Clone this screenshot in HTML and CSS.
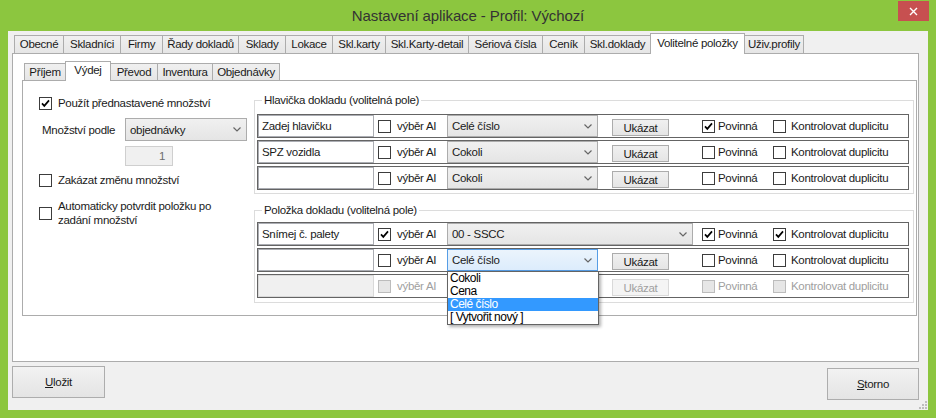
FILE: index.html
```html
<!DOCTYPE html>
<html lang="cs">
<head>
<meta charset="utf-8">
<title>Nastavení aplikace - Profil: Výchozí</title>
<link rel="stylesheet" href="styles.css">
</head>
<body>
<div class="window">
  <div class="titlebar">
    <div></div>
    <div class="title">Nastavení aplikace - Profil: Výchozí</div>
    <div class="tb-right">
      <div class="close"><svg width="9" height="9" viewBox="0 0 9 9"><path d="M1 1 L8 8 M8 1 L1 8" stroke="#fff" stroke-width="1.4" fill="none"/></svg></div>
    </div>
  </div>
  <div class="client">
    <div class="tabctl outer">
      <div class="strip outer-strip">
        <div class="tab">Obecné</div>
        <div class="tab">Skladníci</div>
        <div class="tab">Firmy</div>
        <div class="tab">Řady dokladů</div>
        <div class="tab">Sklady</div>
        <div class="tab">Lokace</div>
        <div class="tab">Skl.karty</div>
        <div class="tab">Skl.Karty-detail</div>
        <div class="tab">Sériová čísla</div>
        <div class="tab">Ceník</div>
        <div class="tab">Skl.doklady</div>
        <div class="tab sel">Volitelné položky</div>
        <div class="tab">Uživ.profily</div>
      </div>
      <div class="panel outer-panel">
        <div class="tabctl inner">
          <div class="strip inner-strip">
            <div class="tab">Příjem</div>
            <div class="tab sel">Výdej</div>
            <div class="tab">Převod</div>
            <div class="tab">Inventura</div>
            <div class="tab">Objednávky</div>
          </div>
          <div class="panel inner-panel">
            <div class="left">
              <div class="chk l1"><span class="box"><svg width="11" height="11" viewBox="0 0 11 11"><path d="M2 5.4 L4.3 7.9 L9 2.4" fill="none" stroke="#000" stroke-width="1.7"/></svg></span>Použít přednastavené množství</div>
              <div class="qty-row">
                <span class="qty-label">Množství podle</span>
                <div class="combo qty-combo"><span>objednávky</span><svg width="8" height="5" viewBox="0 0 8 5"><path d="M0.5 0.5 L4 4 L7.5 0.5" fill="none" stroke="#666" stroke-width="1.2"/></svg></div>
              </div>
              <div class="num">1</div>
              <div class="chk l2"><span class="box"></span>Zakázat změnu množství</div>
              <div class="chk l3"><span class="box"></span><span>Automaticky potvrdit položku po<br>zadání množství</span></div>
            </div>
            <div class="right">
              <div class="group g1">
                <div class="gtitle">Hlavička dokladu (volitelná pole)</div>
                <div class="rows">
                  <div class="row">
                    <div class="tb">Zadej hlavičku</div>
                    <div class="chk ai"><span class="box"></span>výběr AI</div>
                    <div class="combo"><span>Celé číslo</span><svg width="8" height="5" viewBox="0 0 8 5"><path d="M0.5 0.5 L4 4 L7.5 0.5" fill="none" stroke="#666" stroke-width="1.2"/></svg></div>
                    <div class="btn ukaz">Ukázat</div>
                    <div class="chk pov"><span class="box"><svg width="11" height="11" viewBox="0 0 11 11"><path d="M2 5.4 L4.3 7.9 L9 2.4" fill="none" stroke="#000" stroke-width="1.7"/></svg></span>Povinná</div>
                    <div class="chk dup"><span class="box"></span>Kontrolovat duplicitu</div>
                  </div>
                  <div class="row">
                    <div class="tb">SPZ vozidla</div>
                    <div class="chk ai"><span class="box"></span>výběr AI</div>
                    <div class="combo"><span>Cokoli</span><svg width="8" height="5" viewBox="0 0 8 5"><path d="M0.5 0.5 L4 4 L7.5 0.5" fill="none" stroke="#666" stroke-width="1.2"/></svg></div>
                    <div class="btn ukaz">Ukázat</div>
                    <div class="chk pov"><span class="box"></span>Povinná</div>
                    <div class="chk dup"><span class="box"></span>Kontrolovat duplicitu</div>
                  </div>
                  <div class="row">
                    <div class="tb"></div>
                    <div class="chk ai"><span class="box"></span>výběr AI</div>
                    <div class="combo"><span>Cokoli</span><svg width="8" height="5" viewBox="0 0 8 5"><path d="M0.5 0.5 L4 4 L7.5 0.5" fill="none" stroke="#666" stroke-width="1.2"/></svg></div>
                    <div class="btn ukaz">Ukázat</div>
                    <div class="chk pov"><span class="box"></span>Povinná</div>
                    <div class="chk dup"><span class="box"></span>Kontrolovat duplicitu</div>
                  </div>
                </div>
              </div>
              <div class="group g2">
                <div class="gtitle">Položka dokladu (volitelná pole)</div>
                <div class="rows">
                  <div class="row">
                    <div class="tb">Snímej č. palety</div>
                    <div class="chk ai"><span class="box"><svg width="11" height="11" viewBox="0 0 11 11"><path d="M2 5.4 L4.3 7.9 L9 2.4" fill="none" stroke="#000" stroke-width="1.7"/></svg></span>výběr AI</div>
                    <div class="combo wide"><span>00 - SSCC</span><svg width="8" height="5" viewBox="0 0 8 5"><path d="M0.5 0.5 L4 4 L7.5 0.5" fill="none" stroke="#666" stroke-width="1.2"/></svg></div>
                    <div class="chk pov"><span class="box"><svg width="11" height="11" viewBox="0 0 11 11"><path d="M2 5.4 L4.3 7.9 L9 2.4" fill="none" stroke="#000" stroke-width="1.7"/></svg></span>Povinná</div>
                    <div class="chk dup"><span class="box"><svg width="11" height="11" viewBox="0 0 11 11"><path d="M2 5.4 L4.3 7.9 L9 2.4" fill="none" stroke="#000" stroke-width="1.7"/></svg></span>Kontrolovat duplicitu</div>
                  </div>
                  <div class="row">
                    <div class="tb"></div>
                    <div class="chk ai"><span class="box"></span>výběr AI</div>
                    <div class="combo open"><span>Celé číslo</span><svg width="8" height="5" viewBox="0 0 8 5"><path d="M0.5 0.5 L4 4 L7.5 0.5" fill="none" stroke="#666" stroke-width="1.2"/></svg>
                      <div class="dropdown">
                        <div class="item">Cokoli</div>
                        <div class="item">Cena</div>
                        <div class="item hl">Celé číslo</div>
                        <div class="item">[ Vytvořit nový ]</div>
                      </div>
                    </div>
                    <div class="btn ukaz">Ukázat</div>
                    <div class="chk pov"><span class="box"></span>Povinná</div>
                    <div class="chk dup"><span class="box"></span>Kontrolovat duplicitu</div>
                  </div>
                  <div class="row dis">
                    <div class="tb"></div>
                    <div class="chk ai"><span class="box"></span>výběr AI</div>
                    <div class="combo"><span></span></div>
                    <div class="btn ukaz">Ukázat</div>
                    <div class="chk pov"><span class="box"></span>Povinná</div>
                    <div class="chk dup"><span class="box"></span>Kontrolovat duplicitu</div>
                  </div>
                </div>
              </div>
            </div>
          </div>
        </div>
      </div>
    </div>
    <div class="actions">
      <div class="btn big save"><span><u>U</u>ložit</span></div>
      <div class="btn big cancel"><span><u>S</u>torno</span></div>
    </div>
    <svg class="grip" width="8" height="8" viewBox="0 0 8 8"><g fill="#bdbdbd"><rect x="6" y="0" width="2" height="2"/><rect x="3" y="3" width="2" height="2"/><rect x="6" y="3" width="2" height="2"/><rect x="0" y="6" width="2" height="2"/><rect x="3" y="6" width="2" height="2"/><rect x="6" y="6" width="2" height="2"/></g></svg>
  </div>
</div>
</body>
</html>
```

FILE: styles.css
```css
* { box-sizing: border-box; }
html, body { margin: 0; padding: 0; }
body {
  width: 936px;
  height: 418px;
  overflow: hidden;
  font-family: "Liberation Sans", Arial, sans-serif;
  font-size: 11.5px;
  letter-spacing: -0.3px;
  color: #1a1a1a;
}
.window {
  width: 936px;
  height: 418px;
  background: #8cc63f;
  display: flex;
  flex-direction: column;
}
.titlebar {
  height: 31px;
  flex: none;
  display: grid;
  grid-template-columns: 1fr auto 1fr;
}
.title {
  font-size: 15px;
  letter-spacing: -0.1px;
  color: #333;
  line-height: 31px;
  white-space: nowrap;
}
.tb-right {
  display: flex;
  justify-content: flex-end;
  align-items: flex-start;
  padding-right: 7px;
}
.close {
  width: 31px;
  height: 20px;
  margin-top: 1px;
  background: #c75050;
  display: flex;
  align-items: center;
  justify-content: center;
}
.client {
  flex: 1;
  margin: 0 8px 8px;
  background: #f0f0f0;
  position: relative;
  display: flex;
  flex-direction: column;
}

/* tab controls */
.outer { margin: 2px 9px 0 4px; }
.strip {
  display: grid;
  align-items: end;
  justify-content: start;
  position: relative;
}
.outer-strip {
  height: 21px;
  margin-bottom: -1px;
  padding-left: 2px;
  grid-template-columns: 49px 57px 42px 76px 47px 47px 53px 83px 74px 42px 66px 94px 59px;
}
.tab {
  height: 19px;
  margin-right: -1px;
  border: 1px solid #acacac;
  border-bottom: 0;
  background: linear-gradient(#f0f0f0, #e5e5e5);
  text-align: center;
  line-height: 17px;
  white-space: nowrap;
  position: relative;
  z-index: 0;
}
.tab.sel {
  height: 21px;
  background: #fff;
  line-height: 18px;
  z-index: 2;
}
.panel {
  background: #fff;
  border: 1px solid #acacac;
  position: relative;
  z-index: 1;
}
.outer-panel { height: 309px; }
.inner { margin: 7px 1px 0 9px; }
.inner-strip {
  height: 20px;
  margin-bottom: -1px;
  padding-left: 2px;
  grid-template-columns: 41px 45px 47px 55px 67px;
}
.inner-strip .tab { height: 18px; line-height: 16px; }
.inner-strip .tab.sel { height: 20px; line-height: 17px; }
.inner-panel {
  height: 236px;
  display: flex;
}

/* checkboxes */
.chk {
  display: flex;
  align-items: center;
  gap: 6px;
  white-space: nowrap;
}
.box {
  width: 13px;
  height: 13px;
  flex: none;
  border: 1px solid #3c3c3c;
  background: #fff;
  display: flex;
  align-items: center;
  justify-content: center;
}
.box svg { display: block; }

/* left column */
.left {
  width: 231px;
  flex: none;
  padding: 15px 0 0 16px;
  display: flex;
  flex-direction: column;
  align-items: flex-start;
}
.l1 { height: 14px; }
.qty-row {
  margin-top: 8px;
  display: flex;
  align-items: center;
}
.qty-label {
  width: 86px;
  padding-left: 3px;
}
.combo {
  width: 151px;
  height: 22px;
  flex: none;
  border: 1px solid #acacac;
  background: linear-gradient(#f0f0f0, #e5e5e5);
  display: flex;
  align-items: center;
  justify-content: space-between;
  padding: 0 5px 0 4px;
  white-space: nowrap;
}
.combo svg { flex: none; }
.qty-combo { width: 122px; height: 23px; }
.num {
  margin: 5px 0 0 86px;
  width: 48px;
  height: 20px;
  border: 1px solid #cfcfcf;
  background: #f0f0f0;
  color: #6d6d6d;
  text-align: right;
  padding-right: 7px;
  line-height: 18px;
}
.l2 { margin-top: 7px; height: 14px; }
.l3 { margin-top: 12px; line-height: 14px; white-space: normal; }

/* right column */
.right {
  width: 660px;
  flex: none;
  padding-top: 19px;
}
.group {
  border: 1px solid #dcdcdc;
  padding: 0 4px 0 2px;
}
.g1 { height: 94px; }
.g2 { height: 93px; margin-top: 16px; }
.gtitle {
  margin: -8px 0 0 5px;
  padding: 0 2px;
  background: #fff;
  width: max-content;
  line-height: 15px;
}
.rows {
  display: flex;
  flex-direction: column;
  gap: 2px;
  margin-top: 6px;
}
.g2 .rows { margin-top: 4px; }
.row {
  height: 24px;
  border: 1px solid #646464;
  display: flex;
  align-items: center;
}
.tb {
  width: 116px;
  height: 22px;
  flex: none;
  border: 1px solid #abadb3;
  background: #fff;
  padding-left: 3px;
  line-height: 20px;
  white-space: nowrap;
}
.ai { margin-left: 4px; width: 69px; flex: none; }
.btn {
  border: 1px solid #acacac;
  background: linear-gradient(#f0f0f0, #e5e5e5);
  display: flex;
  align-items: center;
  justify-content: center;
}
.ukaz {
  margin-left: 14px;
  width: 57px;
  height: 17px;
  flex: none;
  align-self: flex-end;
  margin-bottom: 1px;
}
.pov { margin-left: 33px; width: 71px; gap: 3px; flex: none; }
.combo.wide { width: 246px; }
.combo.wide + .pov { margin-left: 9px; }
.dup { gap: 5px; }

.row.dis .tb { background: #f0f0f0; border-color: #d9d9d9; }
.row.dis .box { background: #e6e6e6; border-color: #bcbcbc; }
.row.dis .chk,
.row.dis .btn { color: #a0a0a0; }
.row.dis .btn { background: #f4f4f4; border-color: #d9d9d9; }
.row.dis .combo { background: #f4f4f4; border-color: #d9d9d9; }

/* open combo + dropdown */
.combo.open {
  position: relative;
  border-color: #569de5;
  background: linear-gradient(#ebf4fc, #dcecfc);
}
.dropdown {
  position: absolute;
  top: calc(100% + 1px);
  left: -1px;
  width: 152px;
  border: 1px solid #646464;
  background: #fff;
  box-shadow: 2px 2px 3px rgba(0, 0, 0, 0.3);
  z-index: 10;
  font-size: 12px;
  letter-spacing: -0.5px;
  color: #000;
}
.item {
  height: 13px;
  line-height: 13px;
  padding-left: 2px;
}
.item.hl { background: #3399ff; color: #fff; }

/* bottom buttons */
.actions {
  display: flex;
  justify-content: space-between;
  align-items: flex-start;
  padding: 0 9px 0 4px;
}
.btn.big {
  height: 32px;
  border-color: #adadad;
  background: linear-gradient(#f2f2f2, #e4e4e4);
}
.save { width: 93px; margin-top: 4px; }
.cancel { width: 92px; margin-top: 6px; }
.grip {
  position: absolute;
  right: 1px;
  bottom: 1px;
}
```
